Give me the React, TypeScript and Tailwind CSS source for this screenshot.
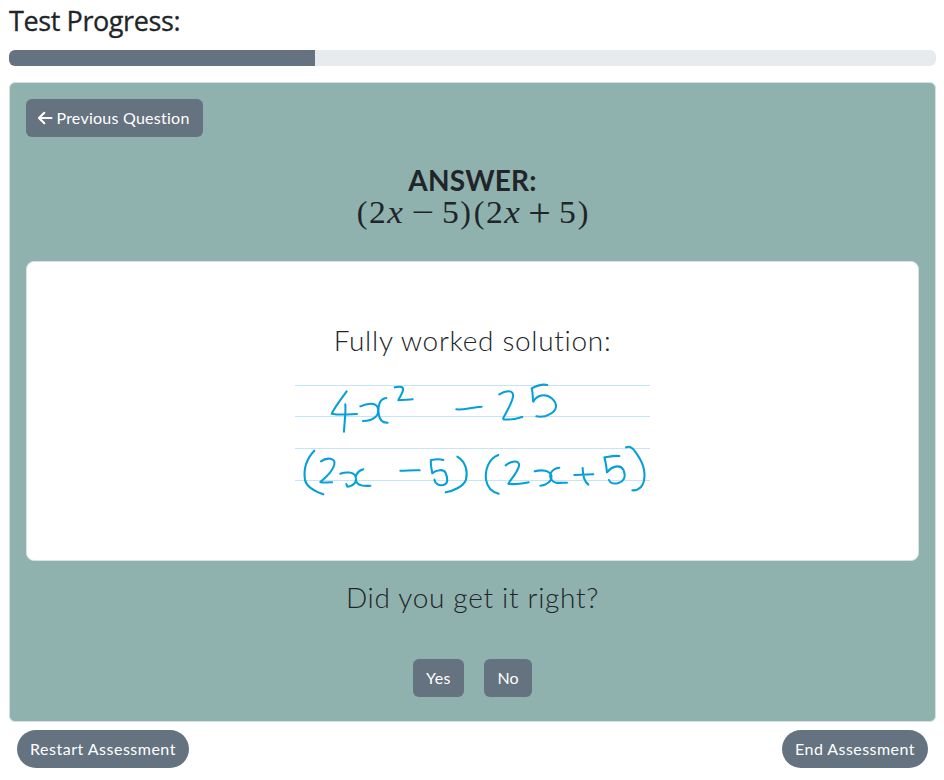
import type { ReactNode } from "react";

const base =
  "flex h-[38px] items-center justify-center whitespace-nowrap bg-[#64737f] font-['Lato',sans-serif] text-[16px] leading-6 text-white";

function Button({ className, children }: { className: string; children: ReactNode }) {
  return <button className={`${base} ${className}`}>{children}</button>;
}

const expression: [string, string][] = [
  ["(", "w-3.5"],
  ["2", "w-[17px] scale-x-105"],
  ["x", "w-[18px] italic scale-x-110"],
  ["−", "w-[37px] scale-x-125"],
  ["5", "w-[19px] scale-x-105"],
  [")", "w-[11px]"],
  ["(", "w-4"],
  ["2", "w-[15px] scale-x-105"],
  ["x", "w-5 italic scale-x-110"],
  ["+", "w-[35px] scale-125"],
  ["5", "w-[21px] scale-x-105"],
  [")", "w-3 -translate-x-px"],
];

function WorkedSolution() {
  return (
    <svg className="h-[120px] w-[355px]" viewBox="15 180 1065 360" fill="none" strokeLinecap="round" strokeLinejoin="round">
      <g stroke="#c3e5f9" strokeWidth="3" strokeLinecap="butt">
        <path d="M15 196.5H1080M15 289.5H1080M15 385.5H1080M15 481.5H1080" />
      </g>
      <g stroke="#069fd8" strokeWidth="6.2">
        <path d="M170 214C154 236 137 257 125 281C149 286 176 283 201 282M166 253C168 280 163 307 162 335" />
        <path d="M211 259C231 250 256 246 263 262C270 285 253 303 219 303M289 234C267 237 264 262 266 282C269 302 278 309 293 308" />
        <path d="M314 202C332 198 341 200 339 210C337 223 327 233 325 241C339 238 353 240 368 238" />
        <path d="M499 268C523 270 544 262 575 260" />
        <path d="M628 223C647 211 672 208 669 230C665 252 650 274 641 292C635 302 650 298 665 298C677 297 687 293 697 291" />
        <path d="M772 195C756 191 738 198 725 205C730 219 727 235 730 245C740 225 767 219 785 235C806 253 800 273 778 283C765 291 750 291 739 289" />
        <path d="M73 392C50 416 40 448 45 480C50 501 73 514 100 523" />
        <path d="M93 424C108 412 138 412 133 433C130 451 103 476 91 486C101 490 113 486 126 487" />
        <path d="M151 461C168 455 190 456 196 468C203 486 190 499 172 500L169 492M220 448C200 453 194 471 198 482C203 499 222 499 241 497" />
        <path d="M331 452C351 452 369 450 389 451" />
        <path d="M460 420C447 416 435 418 423 420C421 433 425 449 427 460C438 449 462 446 467 459C474 476 475 491 460 495C448 498 436 493 433 479" />
        <path d="M502 410C528 426 534 455 528 479C522 499 489 513 467 517" />
        <path d="M625 405C595 417 585 449 588 479C592 503 607 517 626 521" />
        <path d="M647 436C663 423 690 418 687 438C683 456 663 478 655 491C672 495 693 491 716 487" />
        <path d="M734 454C756 448 778 451 784 466C787 484 770 495 751 497M808 443C786 445 775 464 784 478C791 493 812 488 831 488" />
        <path d="M853 465L910 463M878 444C878 463 880 482 895 494" />
        <path d="M988 408C973 406 956 410 943 412C948 427 949 443 951 457C965 440 990 431 1000 449C1010 473 1000 485 983 490C971 492 961 491 957 480" />
        <path d="M1008 382C1026 374 1037 397 1050 417C1068 449 1067 484 1053 501C1044 510 1037 512 1027 511" />
      </g>
    </svg>
  );
}

export default function App() {
  return (
    <main className="h-[780px] bg-white pl-[9px] pr-2 font-['Lato',sans-serif] text-[#212529]">
      <h1 className="flex h-[50px] items-start whitespace-nowrap pt-1 font-['Open_Sans',sans-serif] text-[27px] font-medium leading-[34px] tracking-[-0.4px] [-webkit-text-stroke:0.3px_#212529]">
        Test Progress:
      </h1>
      <div className="h-4 overflow-hidden rounded-md bg-[#e8ebee]">
        <div className="h-full w-[306px] bg-[#64737f]" />
      </div>

      <section className="mt-4 flex h-[640px] flex-col items-center rounded-md border border-[#d5e0df] bg-[#8fb2ae] p-4">
        <Button className="w-[177px] gap-[3px] self-start rounded-md pr-0.5">
          <svg className="h-4 w-4" viewBox="0 0 16 16" fill="none" stroke="white" strokeWidth="2.2" strokeLinecap="round" strokeLinejoin="round">
            <path d="M14.4 8H2.2M7.3 2.8L2 8l5.3 5.2" />
          </svg>
          <span className="tracking-[0.25px]">Previous Question</span>
        </Button>

        <div className="mt-[27px] flex h-[97px] flex-col items-center whitespace-nowrap">
          <h2 className="text-[28px] font-bold leading-8 tracking-[0.2px]">ANSWER:</h2>
          <p className="flex font-['Liberation_Serif',serif] text-[32px] leading-8">
            {expression.map(([symbol, style], i) => (
              <span key={i} className={`flex justify-center ${style}`}>
                {symbol}
              </span>
            ))}
          </p>
        </div>

        <div className="flex h-[300px] w-full flex-col items-center rounded-lg border border-[#d9e2e1] bg-white pt-[60px]">
          <h3 className="h-[58px] whitespace-nowrap text-[28px] font-light leading-9 tracking-[0.7px]">Fully worked solution:</h3>
          <WorkedSolution />
        </div>

        <h3 className="mt-[18px] whitespace-nowrap text-[28px] font-light leading-9 tracking-[0.7px]">Did you get it right?</h3>
        <div className="mt-11 flex gap-5">
          <Button className="w-[51px] rounded-md tracking-[0.4px]">Yes</Button>
          <Button className="w-12 rounded-md">No</Button>
        </div>
      </section>

      <footer className="mt-2 flex justify-between px-2">
        <Button className="w-[172px] rounded-full tracking-[0.5px]">Restart Assessment</Button>
        <Button className="w-[146px] rounded-full tracking-[0.45px]">End Assessment</Button>
      </footer>
    </main>
  );
}
